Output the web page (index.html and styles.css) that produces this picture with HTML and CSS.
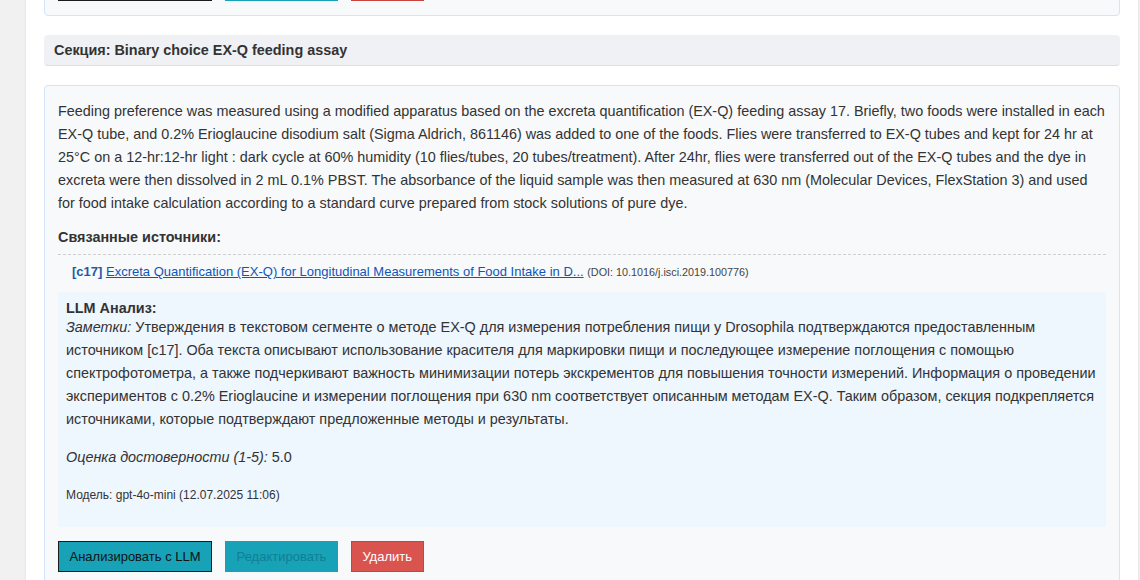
FILE: index.html
```html
<!DOCTYPE html>
<html lang="ru">
<head>
<meta charset="utf-8">
<title>Секция</title>
<link rel="stylesheet" href="styles.css">
</head>
<body>
<div class="page">
  <div class="card card-prev">
    <div class="actions">
      <button class="btn btn-llm">Анализировать с LLM</button>
      <button class="btn btn-edit">Редактировать</button>
      <button class="btn btn-del">Удалить</button>
    </div>
  </div>

  <div class="section-head">Секция: Binary choice EX-Q feeding assay</div>

  <div class="card card-main">
    <p class="seg-text">Feeding preference was measured using a modified apparatus based on the excreta quantification (EX-Q) feeding assay 17. Briefly, two foods were installed in each EX-Q tube, and 0.2% Erioglaucine disodium salt (Sigma Aldrich, 861146) was added to one of the foods. Flies were transferred to EX-Q tubes and kept for 24 hr at 25°C on a 12-hr:12-hr light : dark cycle at 60% humidity (10 flies/tubes, 20 tubes/treatment). After 24hr, flies were transferred out of the EX-Q tubes and the dye in excreta were then dissolved in 2 mL 0.1% PBST. The absorbance of the liquid sample was then measured at 630 nm (Molecular Devices, FlexStation 3) and used for food intake calculation according to a standard curve prepared from stock solutions of pure dye.</p>

    <h4 class="refs-title">Связанные источники:</h4>
    <ul class="refs">
      <li class="ref"><span class="ref-id">[c17]</span> <a class="ref-link" href="#">Excreta Quantification (EX-Q) for Longitudinal Measurements of Food Intake in D...</a> <span class="ref-doi">(DOI: 10.1016/j.isci.2019.100776)</span></li>
    </ul>

    <div class="llm">
      <div class="llm-title">LLM Анализ:</div>
      <p class="llm-notes"><em>Заметки:</em> Утверждения в текстовом сегменте о методе EX-Q для измерения потребления пищи у Drosophila подтверждаются предоставленным источником [c17]. Оба текста описывают использование красителя для маркировки пищи и последующее измерение поглощения с помощью спектрофотометра, а также подчеркивают важность минимизации потерь экскрементов для повышения точности измерений. Информация о проведении экспериментов с 0.2% Erioglaucine и измерении поглощения при 630 nm соответствует описанным методам EX-Q. Таким образом, секция подкрепляется источниками, которые подтверждают предложенные методы и результаты.</p>
      <p class="llm-score"><em>Оценка достоверности (1-5):</em> 5.0</p>
      <p class="llm-model">Модель: gpt-4o-mini (12.07.2025 11:06)</p>
    </div>

    <div class="actions">
      <button class="btn btn-llm">Анализировать с LLM</button>
      <button class="btn btn-edit">Редактировать</button>
      <button class="btn btn-del">Удалить</button>
    </div>
  </div>
</div>
</body>
</html>
```

FILE: styles.css
```css
html, body {
  margin: 0;
  padding: 0;
}
body {
  background: #f1f1f1;
  font-family: "Liberation Sans", Arial, sans-serif;
  color: #333;
  font-size: 14.4px;
  overflow: hidden;
}
.page {
  margin-left: 26px;
  width: 1076px;
  padding: 0 18px 40px;
  background: #fff;
  box-shadow: 0 0 3px rgba(0, 0, 0, 0.08);
  min-height: 620px;
}
.card {
  background: #f7f9fb;
  border: 1px solid #d3e5f8;
  border-radius: 4px;
  padding: 0 13px 14px;
}
.card-prev {
  margin-top: -45px;
  padding-top: 14px;
}
.section-head {
  margin-top: 19px;
  height: 31px;
  line-height: 30px;
  padding: 0 10px;
  background: #f0f1f5;
  border-bottom: 1px solid #dddee3;
  border-radius: 4px;
  font-weight: bold;
  font-size: 14.4px;
  color: #333;
  box-sizing: border-box;
}
.card-main {
  margin-top: 19px;
  padding-top: 14px;
}
.seg-text {
  margin: 0;
  line-height: 23px;
}
.refs-title {
  margin: 11px 0 0;
  font-size: 14.4px;
  line-height: 23px;
  font-weight: bold;
}
.refs {
  list-style: none;
  margin: 5px 0 0;
  padding: 6px 0 0 14px;
  border-top: 1px dashed #cfcfcf;
}
.ref {
  font-size: 13px;
  line-height: 21px;
}
.ref-id {
  font-weight: bold;
  color: #1f5aa6;
}
.ref-link {
  color: #1155b6;
  text-decoration: underline;
}
.ref-doi {
  font-size: 10.8px;
  color: #444;
}
.llm {
  margin-top: 9px;
  background: #eef6fe;
  border-radius: 4px;
  padding: 8px 8px 22px;
}
.llm-title {
  font-weight: bold;
  font-size: 14.4px;
  line-height: 16px;
}
.llm-notes {
  margin: 0;
  line-height: 23px;
}
.llm-score {
  margin: 15px 0 0;
  font-size: 14.4px;
  line-height: 23px;
}
.llm-model {
  margin: 17px 0 0;
  font-size: 12px;
  line-height: 19px;
}
.actions {
  display: flex;
  gap: 13px;
}
.card-main .actions {
  margin-top: 14px;
}
.btn {
  font-family: "Liberation Sans", Arial, sans-serif;
  font-size: 13px;
  line-height: 17px;
  padding: 6px 10.5px;
  border: 1px solid transparent;
  border-radius: 0;
  cursor: pointer;
}
.btn-llm {
  background: #17a2b8;
  color: #111;
  border-color: #1b1b1b;
}
.btn-edit {
  background: #17a2b8;
  color: #137f90;
  border-color: #17a2b8;
}
.btn-del {
  background: #d9534f;
  color: #fff;
  border-color: #c64541;
}
```
